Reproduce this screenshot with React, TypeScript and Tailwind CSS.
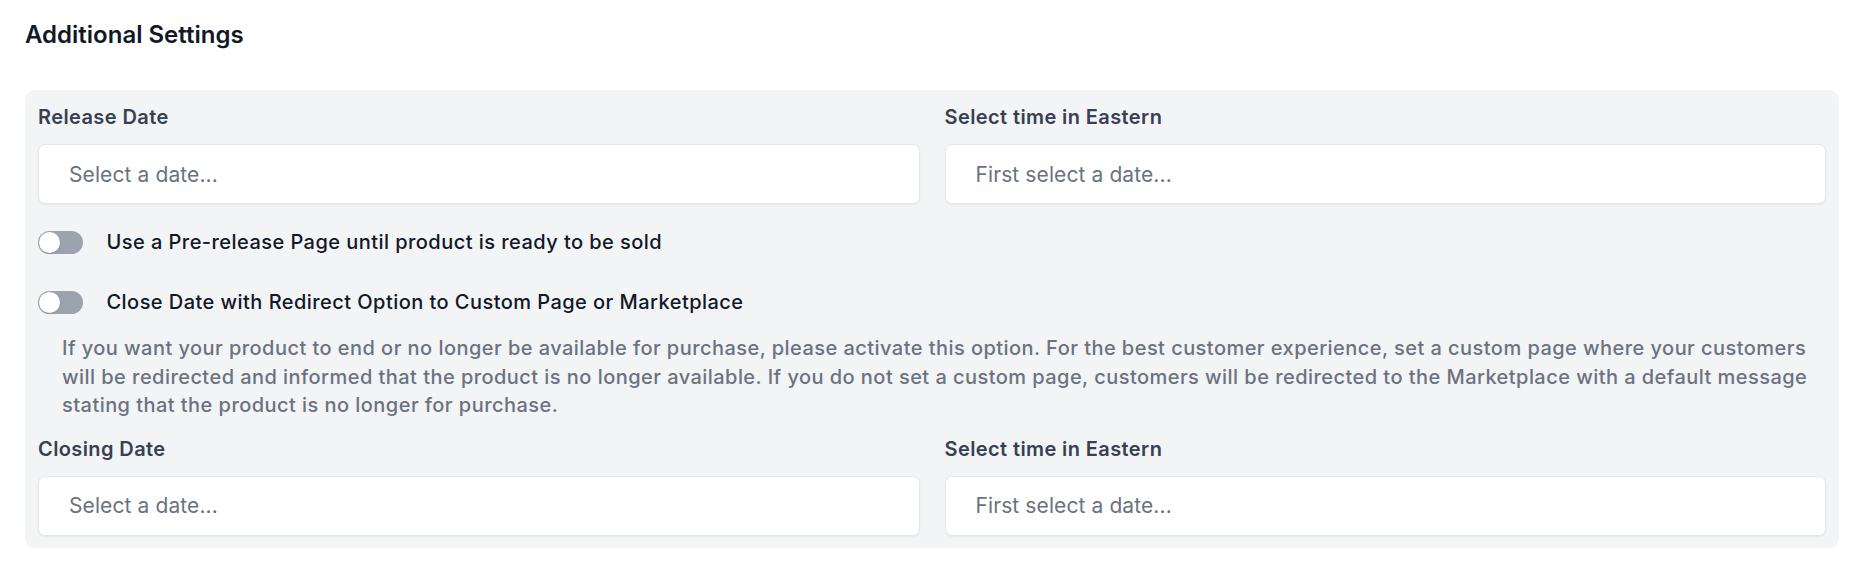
const font = { fontFamily: "Inter, 'Noto Sans', sans-serif" };

function DateField({ label, placeholder }: { label: string; placeholder: string }) {
  return (
    <div className="flex flex-col">
      <div className="text-[20px] leading-[28.8px] font-semibold tracking-[0.4px] text-[#374151]">{label}</div>
      <div className="mt-[12.5px] h-[60px] flex items-center rounded-[7px] bg-white border border-[#e5e7eb] shadow-[0_1px_2px_rgba(0,0,0,0.05)] pl-[30px]">
        <span className="text-[21px] tracking-[0.1px] text-[#6b7280]">{placeholder}</span>
      </div>
    </div>
  );
}

function Toggle({ label }: { label: string }) {
  return (
    <div className="flex items-center gap-[24px]">
      <button className="relative w-[44.5px] h-[23px] rounded-full bg-[#9ca3af] shrink-0">
        <span className="absolute left-px top-px w-[21px] h-[21px] rounded-full bg-white shadow-[0_1px_2px_rgba(0,0,0,0.15)]" />
      </button>
      <span className="text-[20px] leading-[28.8px] font-medium tracking-[0.45px] text-[#111827]">{label}</span>
    </div>
  );
}

export default function App() {
  return (
    <div className="bg-white w-[1864px] h-[565px] pt-[16px] pl-[25px]" style={font}>
      <h2 className="text-[24px] leading-[38px] font-semibold text-[#111827]">Additional Settings</h2>

      <div className="mt-[36px] w-[1814px] rounded-[10px] bg-[#f3f4f6] px-[13px] pt-[13px] pb-[12px]">
        <div className="grid grid-cols-2 gap-x-[25px]">
          <DateField label="Release Date" placeholder="Select a date..." />
          <DateField label="Select time in Eastern" placeholder="First select a date..." />
        </div>

        <div className="mt-[24px] flex flex-col gap-[31px]">
          <Toggle label="Use a Pre-release Page until product is ready to be sold" />
          <Toggle label="Close Date with Redirect Option to Custom Page or Marketplace" />
        </div>

        <p className="mt-[17px] pl-[24px] text-[20px] leading-[28.8px] font-medium tracking-[0.45px] text-[#6b7280]">
          If you want your product to end or no longer be available for purchase, please activate this option. For the best customer experience, set a custom page where your customers will be redirected and informed that the product is no longer available. If you do not set a custom page, customers will be redirected to the Marketplace with a default message stating that the product is no longer for purchase.
        </p>

        <div className="mt-[14.6px] grid grid-cols-2 gap-x-[25px]">
          <DateField label="Closing Date" placeholder="Select a date..." />
          <DateField label="Select time in Eastern" placeholder="First select a date..." />
        </div>
      </div>
    </div>
  );
}
